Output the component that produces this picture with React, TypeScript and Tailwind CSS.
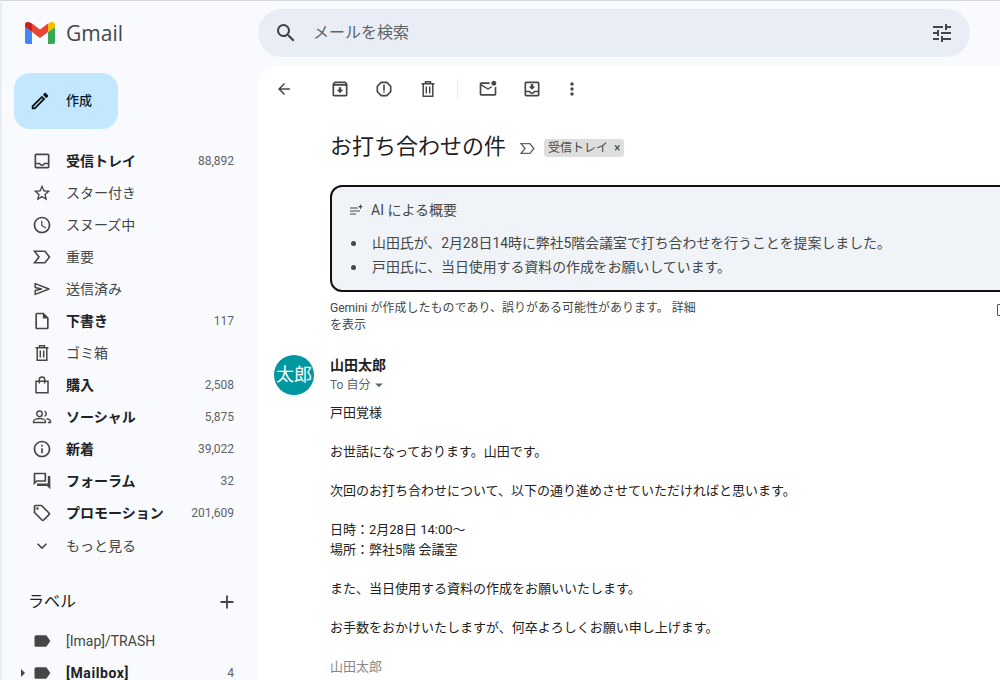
import React from "react";
import {
  MdAdd,
  MdArrowBack,
  MdArrowDropDown,
  MdExpandMore,
  MdInfoOutline,
  MdLabel,
  MdMoreVert,
  MdOutlineAccessTime,
  MdOutlineArchive,
  MdOutlineEdit,
  MdOutlineForum,
  MdOutlineInbox,
  MdOutlineInsertDriveFile,
  MdOutlineLocalOffer,
  MdOutlineMarkEmailUnread,
  MdOutlineMoveToInbox,
  MdOutlineReport,
  MdOutlineStarBorder,
  MdSearch,
  MdTune,
} from "react-icons/md";

const font = "font-['Roboto','Noto_Sans_CJK_JP',sans-serif]";

const ImportantIcon = ({ className = "" }: { className?: string }) => (
  <svg viewBox="0 0 20 20" className={className} fill="none" stroke="currentColor" strokeWidth="1.6">
    <path d="M2.500 4.200h10.400l4.600 5.800-4.600 5.800H2.500L7 10z" />
  </svg>
);

const SentIcon = () => (
  <svg viewBox="0 0 20 20" className="w-5 h-5" fill="none" stroke="currentColor" strokeWidth="1.500">
    <path d="M3.200 4.600 17 10 3.200 15.400V11.600L9.500 10 3.200 8.400z" strokeLinejoin="round" />
  </svg>
);

// gmail's bin has two bars inside, the md set's one doesn't
const TrashIcon = ({ className = "" }: { className?: string }) => (
  <svg viewBox="0 0 20 20" className={className} fill="none" stroke="currentColor" strokeWidth="1.500">
    <path d="M3.500 4.700h13M7.500 4.500V2.800h5v1.700M5.200 4.700v12.500h9.600V4.700M8.300 7.500v7M11.700 7.500v7" />
  </svg>
);

const BagIcon = () => (
  <svg viewBox="0 0 20 20" className="w-5 h-5" fill="none" stroke="currentColor" strokeWidth="1.500">
    <path d="M4 6.200h12v11.500H4zM7.300 8.500V4.600a2.700 2.700 0 0 1 5.400 0v3.900" />
  </svg>
);

const PeopleIcon = () => (
  <svg viewBox="0 0 20 20" className="w-5 h-5" fill="none" stroke="currentColor" strokeWidth="1.400">
    <circle cx="7.500" cy="6.800" r="2.800" />
    <path d="M1.500 15.500v-1c0-1.800 3-3 6-3s6 1.200 6 3v1zM12.500 4.200a2.800 2.800 0 0 1 0 5.200M14.500 11.800c2.200.4 4 1.400 4 2.700v1h-2.500" />
  </svg>
);

const GmailLogo = () => (
  <svg viewBox="0 0 30 22" className="w-[30px] h-[22px]">
    <path d="M2 22h5V10L0 5v15c0 1.100.9 2 2 2z" fill="#4285f4" />
    <path d="M23 22h5c1.100 0 2-.9 2-2V5l-7 5z" fill="#34a853" />
    <path d="M23 1.500V10l7-5V2.800C30 .3 27.200-1 25.200.6z" fill="#fbbc04" />
    <path d="M7 10V1.500L15 7.500l8-6V10l-8 6z" fill="#ea4335" />
    <path d="M0 2.800V5l7 5V1.500L4.800.6C2.800-1 0 .3 0 2.800z" fill="#c5221f" />
  </svg>
);

type NavItem = { icon: React.ReactNode; label: string; count?: string; bold?: boolean };

const icon = "w-5 h-5";
const navItems: NavItem[] = [
  { icon: <MdOutlineInbox className={icon} />, label: "受信トレイ", count: "88,892", bold: true },
  { icon: <MdOutlineStarBorder className={icon} />, label: "スター付き" },
  { icon: <MdOutlineAccessTime className={icon} />, label: "スヌーズ中" },
  { icon: <ImportantIcon className={icon} />, label: "重要" },
  { icon: <SentIcon />, label: "送信済み" },
  { icon: <MdOutlineInsertDriveFile className={icon} />, label: "下書き", count: "117", bold: true },
  { icon: <TrashIcon className={icon} />, label: "ゴミ箱" },
  { icon: <BagIcon />, label: "購入", count: "2,508", bold: true },
  { icon: <PeopleIcon />, label: "ソーシャル", count: "5,875", bold: true },
  { icon: <MdInfoOutline className={icon} />, label: "新着", count: "39,022", bold: true },
  { icon: <MdOutlineForum className={icon} />, label: "フォーラム", count: "32", bold: true },
  { icon: <MdOutlineLocalOffer className={icon} />, label: "プロモーション", count: "201,609", bold: true },
];

const NavRow = ({ item }: { item: NavItem }) => (
  <div className="flex items-center h-8 pl-[30px] pr-6 text-[#444746]">
    <span className="w-[34px] shrink-0">{item.icon}</span>
    <span className={`text-sm flex-1 ${item.bold ? "font-bold text-[#202124]" : ""}`}>{item.label}</span>
    {item.count && <span className="text-xs text-[#5f6368]">{item.count}</span>}
  </div>
);

const Sidebar = () => (
  <aside className="w-[256px] shrink-0 flex flex-col">
    <div className="flex items-center h-[64px] shrink-0 pl-[23px] gap-[11px]">
      <GmailLogo />
      <span className="text-[21px] leading-none text-[#444746] font-['Open_Sans',sans-serif]">Gmail</span>
    </div>
    <div className="pl-3 mt-2 shrink-0">
      <button className="w-[104px] h-14 rounded-2xl bg-[#c2e7ff] flex items-center pl-[15px] gap-[15px] text-[#001d35] text-[13px] font-medium">
        <MdOutlineEdit className="w-[22px] h-[22px] text-[#0b1215]" />
        作成
      </button>
    </div>
    <nav className="mt-4 shrink-0">
      {navItems.map((item) => (
        <NavRow key={item.label} item={item} />
      ))}
      <div className="flex items-center h-8 mt-px pl-[30px] text-[#444746]">
        <span className="w-[34px] shrink-0">
          <MdExpandMore className="w-5 h-5" />
        </span>
        <span className="text-sm">もっと見る</span>
      </div>
    </nav>
    <div className="flex items-center justify-between shrink-0 mt-6 h-8 pl-[26px] pr-5 text-[#202124]">
      <span className="text-base">ラベル</span>
      <MdAdd className="w-[22px] h-[22px] text-[#444746]" />
    </div>
    <div className="mt-[7px] flex flex-col shrink-0">
      <div className="flex items-center h-8 pl-[30px] text-[#444746]">
        <MdLabel className="w-5 h-5 mr-[14px] text-[#444746]" />
        <span className="text-sm">[Imap]/TRASH</span>
      </div>
      <div className="relative flex items-center h-8 pl-[30px] pr-6 text-[#202124]">
        <span className="absolute left-[19px] top-[12px] border-y-[4px] border-y-transparent border-l-[4px] border-l-[#444746]" />
        <MdLabel className="w-5 h-5 mr-[14px] text-[#444746]" />
        <span className="text-sm font-bold flex-1 tracking-[0.6px]">[Mailbox]</span>
        <span className="text-xs text-[#5f6368]">4</span>
      </div>
    </div>
  </aside>
);

const SearchBar = () => (
  <div className="h-[65px] shrink-0 flex items-center pr-[30px]">
    <div className="w-full h-12 mb-[1px] rounded-full bg-[#e9eef6] flex items-center pl-4 pr-[16px] text-[#444746]">
      <MdSearch className="w-6 h-6 mr-[15px] text-[#3c4043]" />
      <span className="flex-1 text-base text-[#5f6368]">メールを検索</span>
      <MdTune className="w-6 h-6" />
    </div>
  </div>
);

const ToolBtn = ({ children, className = "" }: { children: React.ReactNode; className?: string }) => (
  <span className={`w-5 h-5 flex items-center justify-center shrink-0 text-[#444746] ${className}`}>{children}</span>
);

const Toolbar = () => (
  <div className="flex items-center h-[46px] pl-4">
    <ToolBtn>
      <MdArrowBack className="w-[18px] h-[18px]" />
    </ToolBtn>
    <ToolBtn className="ml-[36px]">
      <MdOutlineArchive className="w-5 h-5" />
    </ToolBtn>
    <ToolBtn className="ml-6">
      <MdOutlineReport className="w-5 h-5" />
    </ToolBtn>
    <ToolBtn className="ml-6">
      <TrashIcon className="w-5 h-5" />
    </ToolBtn>
    <div className="w-px h-5 bg-[#eceef0] ml-[19px]" />
    <ToolBtn className="ml-5">
      <MdOutlineMarkEmailUnread className="w-5 h-5" />
    </ToolBtn>
    <ToolBtn className="ml-6">
      <MdOutlineMoveToInbox className="w-5 h-5" />
    </ToolBtn>
    <ToolBtn className="ml-5">
      <MdMoreVert className="w-5 h-5" />
    </ToolBtn>
  </div>
);

const Subject = () => (
  <div className="flex items-center pl-[72px] mt-[18px] h-[34px]">
    <h1 className="text-[22px] leading-none text-[#1f1f1f]">お打ち合わせの件</h1>
    <ImportantIcon className="w-[17px] h-[17px] ml-[13px] mt-[2px] text-[#5f6368]" />
    <span className="ml-[8px] mt-[2px] h-[18px] px-1 rounded-[3px] bg-[#dddfdc] text-xs leading-[18px] text-[#444746] flex items-center gap-[6px]">
      受信トレイ
      <span className="text-[12px]">×</span>
    </span>
  </div>
);

const Bullet = ({ children }: { children: React.ReactNode }) => (
  <div className="flex items-center h-6">
    <span className="w-[5px] h-[5px] rounded-full bg-[#444746] ml-[3px] mr-[16px]" />
    {children}
  </div>
);

const Summary = () => (
  <div className="w-[760px] ml-[72px] mt-[21px]">
    <div className="h-[107px] rounded-xl border-2 border-[#111] bg-[#f0f4f9] pl-[16px] pt-[13px]">
      <div className="flex items-center gap-[7px] text-[#444746] text-sm h-5">
        <svg viewBox="0 0 16 16" className="w-4 h-4" fill="none" stroke="currentColor" strokeWidth="1.200">
          <path d="M2 6h8M2 9h10M2 12h6" />
          <path d="M12.500 2 13.300 4 15 4.700 13.300 5.500 12.500 7.500 11.700 5.500 10 4.700 11.700 4z" fill="currentColor" stroke="none" />
        </svg>
        AI による概要
      </div>
      <div className="mt-[11px] text-[13.9px] text-[#444746]">
        <Bullet>山田氏が、2月28日14時に弊社5階会議室で打ち合わせを行うことを提案しました。</Bullet>
        <Bullet>戸田氏に、当日使用する資料の作成をお願いしています。</Bullet>
      </div>
    </div>
    <div className="flex items-start mt-[8px] pr-[81px] justify-between">
      <p className="w-[370px] text-xs leading-[17px] text-[#444746]">
        Gemini が作成したものであり、誤りがある可能性があります。 詳細を表示
      </p>
      <span className="w-[12px] h-[12px] mt-[4px] border-[1.5px] border-[#555] rounded-[1px]" />
    </div>
  </div>
);

const bodyLines = [
  "戸田覚様",
  "",
  "お世話になっております。山田です。",
  "",
  "次回のお打ち合わせについて、以下の通り進めさせていただければと思います。",
  "",
  "日時\uFF1A2月28日 14:00〜",
  "場所\uFF1A弊社5階 会議室",
  "",
  "また、当日使用する資料の作成をお願いいたします。",
  "",
  "お手数をおかけいたしますが、何卒よろしくお願い申し上げます。",
  "",
];

const Message = () => (
  <div className="flex pl-4 mt-[20px]">
    <div className="w-10 h-10 mt-[1px] rounded-full bg-[#00979f] text-white text-lg flex items-center justify-center shrink-0">
      太郎
    </div>
    <div className="ml-4 mt-[1px]">
      <div className="text-sm leading-5 font-bold text-[#1f1f1f]">山田太郎</div>
      <div className="flex items-center text-xs leading-[18px] mt-px text-[#5f6368]">
        To 自分
        <MdArrowDropDown className="w-[18px] h-[18px]" />
      </div>
      <div className="mt-[9px] text-[13px] leading-[19.5px] text-[#222]">
        {bodyLines.map((line, i) => (
          <div key={i} className="h-[19.5px] whitespace-nowrap">
            {line}
          </div>
        ))}
        <div className="text-[#888]">山田太郎</div>
      </div>
    </div>
  </div>
);

export default function App() {
  return (
    <div className={`h-[680px] w-[1000px] overflow-hidden bg-[#f8fafd] border-t border-[#d3d6db] border-l-2 border-l-[#e9eef6] flex ${font}`}>
      <Sidebar />
      <div className="flex-1 min-w-0 flex flex-col">
        <SearchBar />
        <main className="flex-1 bg-white rounded-tl-2xl overflow-hidden">
          <Toolbar />
          <Subject />
          <Summary />
          <Message />
        </main>
      </div>
    </div>
  );
}
